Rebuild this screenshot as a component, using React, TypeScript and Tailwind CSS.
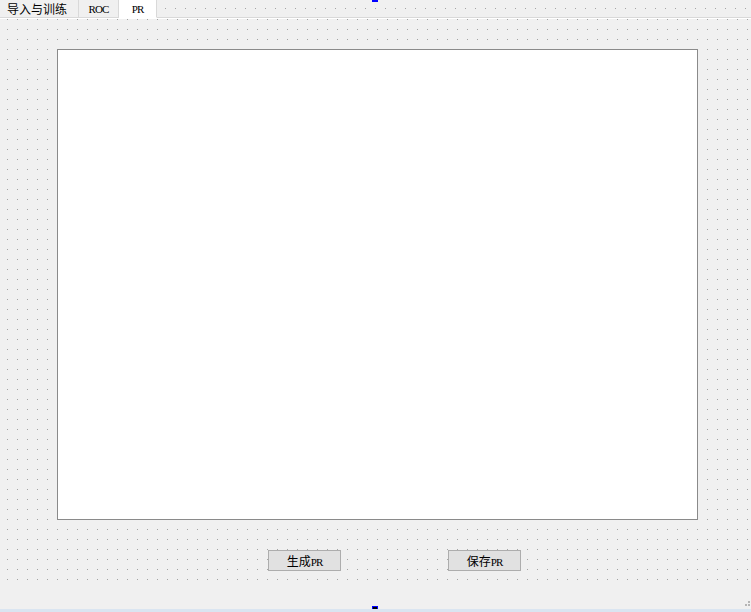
import React from "react";

const dots =
  "bg-[image:conic-gradient(at_1px_1px,transparent_75%,#a3a3a3_0)] bg-[length:10px_10px]";

const latin = "font-['Liberation_Serif','Times_New_Roman',serif] text-[11px] tracking-[-0.9px]";
const cjkFont = "font-['Noto_Sans_CJK_SC',sans-serif]";

function Tab({ label, width, active, cjk }: { label: string; width: string; active?: boolean; cjk?: boolean }) {
  return (
    <div
      className={`${width} h-[18px] flex items-center border-r border-b border-[#d9d9d9] ${
        active ? "bg-white border-b-white" : "bg-[#f0f0f0]"
      } ${cjk ? "pl-[7px]" : "justify-center"}`}
    >
      {cjk ? (
        <span className={`${cjkFont} text-[12px] leading-none text-black`}>{label}</span>
      ) : (
        <span className={`${latin} leading-none text-black pt-[1px]`}>{label}</span>
      )}
    </div>
  );
}

function Btn({ cjk, text, className }: { cjk: string; text: string; className?: string }) {
  return (
    <button
      className={`w-[73px] h-[21px] bg-[#e1e1e1] border border-[#adadad] flex items-center justify-center text-black ${className ?? ""}`}
    >
      <span className="leading-[12px]">
        <span className={`${cjkFont} text-[12px]`}>{cjk}</span>
        <span className={latin}>{text}</span>
      </span>
    </button>
  );
}

export default function App() {
  return (
    <div className="relative w-[751px] h-[612px] overflow-hidden bg-[#f0f0f0] flex flex-col">
      {/* tab bar */}
      <div className="flex h-[18px] shrink-0">
        <Tab label="导入与训练" width="w-[79px]" cjk />
        <Tab label="ROC" width="w-[40px]" />
        <Tab label="PR" width="w-[38px]" active />
        <div className={`flex-1 h-[18px] border-b border-[#d9d9d9] ${dots} bg-[position:8px_8px]`} />
      </div>
      <div className="h-[1px] bg-white shrink-0" />

      {/* tab page */}
      <div className={`h-[566px] shrink-0 ${dots} bg-[position:7px_0px] pt-[30px] pl-[57px]`}>
        <div className="w-[641px] h-[471px] bg-white border border-[#8a8a8a]" />
        <div className="flex mt-[30px] ml-[211px]">
          <Btn cjk="生成" text="PR" />
          <Btn cjk="保存" text="PR" className="ml-[107px]" />
        </div>
      </div>

      <div className="flex-1" />
      <div className="h-[3px] bg-[#dae5f1] shrink-0" />

      {/* designer selection handles */}
      <div className="absolute left-[372px] top-0 w-[6px] h-[2px] bg-[#0000ff]" />
      <div className="absolute left-[372px] top-[606px] w-[6px] h-[3px] bg-[#0000ff] flex items-end justify-center">
        <div className="w-[4px] h-[2px] bg-black" />
      </div>
      <svg className="absolute left-[744px] top-[600px]" width="7" height="8" viewBox="0 0 7 8">
        <rect x="4" y="1" width="2" height="2" fill="#b5b5b5" />
        <rect x="1" y="4" width="2" height="2" fill="#b5b5b5" />
        <rect x="4" y="4" width="2" height="2" fill="#b5b5b5" />
      </svg>
    </div>
  );
}
